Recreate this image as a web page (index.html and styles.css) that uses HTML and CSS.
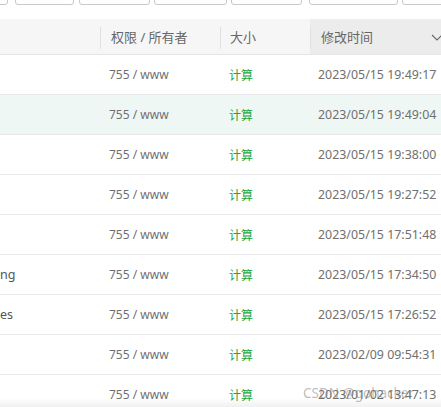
FILE: index.html
```html
<!DOCTYPE html>
<html lang="zh">
<head>
<meta charset="utf-8">
<link rel="stylesheet" href="styles.css">
</head>
<body>
<div class="page">
  <div class="toolbar">
    <span class="btn b1"></span>
    <span class="btn b2"></span>
    <span class="btn b3"></span>
    <span class="btn b4"></span>
    <span class="btn b5"></span>
    <span class="btn b6"></span>
    <span class="btn b7"></span>
  </div>
  <div class="table">
    <div class="row head">
      <div class="cell c1"></div>
      <div class="cell c2"><span class="sep"></span>权限 / 所有者</div>
      <div class="cell c3"><span class="sep"></span>大小</div>
      <div class="cell c4 sorted"><span class="sep"></span>修改时间
        <svg class="chev" width="12" height="8" viewBox="0 0 12 8"><polyline points="1,1 6,6 11,1" fill="none" stroke="#666" stroke-width="1.1"/></svg>
      </div>
    </div>
    <div class="row"><div class="cell c1"></div><div class="cell c2">755 / www</div><div class="cell c3 calc">计算</div><div class="cell c4">2023/05/15 19:49:17</div></div>
    <div class="row hl"><div class="cell c1"></div><div class="cell c2">755 / www</div><div class="cell c3 calc">计算</div><div class="cell c4">2023/05/15 19:49:04</div></div>
    <div class="row"><div class="cell c1"></div><div class="cell c2">755 / www</div><div class="cell c3 calc">计算</div><div class="cell c4">2023/05/15 19:38:00</div></div>
    <div class="row"><div class="cell c1"></div><div class="cell c2">755 / www</div><div class="cell c3 calc">计算</div><div class="cell c4">2023/05/15 19:27:52</div></div>
    <div class="row"><div class="cell c1"></div><div class="cell c2">755 / www</div><div class="cell c3 calc">计算</div><div class="cell c4">2023/05/15 17:51:48</div></div>
    <div class="row"><div class="cell c1 name">ng</div><div class="cell c2">755 / www</div><div class="cell c3 calc">计算</div><div class="cell c4">2023/05/15 17:34:50</div></div>
    <div class="row"><div class="cell c1 name">es</div><div class="cell c2">755 / www</div><div class="cell c3 calc">计算</div><div class="cell c4">2023/05/15 17:26:52</div></div>
    <div class="row"><div class="cell c1"></div><div class="cell c2">755 / www</div><div class="cell c3 calc">计算</div><div class="cell c4">2023/02/09 09:54:31</div></div>
    <div class="row"><div class="cell c1"></div><div class="cell c2">755 / www</div><div class="cell c3 calc">计算</div><div class="cell c4">2023/01/02 13:47:13</div></div>
  </div>
  <div class="watermark">CSDN @gohacker</div>
  <div class="fade"></div>
</div>
</body>
</html>
```
FILE: styles.css
```css
html, body {
  margin: 0;
  padding: 0;
  background: #fff;
}
body {
  font-family: "Noto Sans", "Noto Sans CJK SC", sans-serif;
  color: #707070;
  overflow: hidden;
}
.page {
  position: relative;
  width: 441px;
  height: 407px;
  overflow: hidden;
}
.toolbar {
  height: 5px;
  display: flex;
  align-items: flex-end;
  overflow: hidden;
  margin-bottom: 14px;
}
.btn {
  flex: none;
  height: 30px;
  box-sizing: border-box;
  border: 1px solid #c8c8c8;
  border-radius: 3px;
  background: #fff;
}
.b1 { width: 20px; margin-left: -12px; }
.b2 { width: 59px; margin-left: 7px; }
.b3 { width: 71px; margin-left: 5px; }
.b4 { width: 73px; margin-left: 4px; }
.b5 { width: 71px; margin-left: 4px; }
.b6 { width: 89px; margin-left: 7px; }
.b7 { width: 60px; margin-left: 4px; }
.table {
  width: 460px;
}
.row {
  display: flex;
  height: 40px;
  box-sizing: border-box;
  border-bottom: 1px solid #e8e8e8;
  font-size: 12px;
}
.row.hl {
  background: #eff7f5;
}
.row.head {
  height: 36px;
  background: #f6f6f6;
  border-bottom: 1px solid #e5e5e5;
  font-size: 13px;
  color: #666;
}
.cell {
  position: relative;
  flex: none;
  display: flex;
  align-items: center;
  box-sizing: border-box;
  padding-left: 9px;
  white-space: nowrap;
}
.c1 { width: 100px; padding-left: 0; }
.c2 { width: 120px; }
.c3 { width: 90px; }
.c4 { width: 150px; padding-left: 8px; font-size: 12.4px; }
.name { color: #555; font-size: 12.5px; }
.head .c2 { padding-left: 11px; }
.head .c3 { padding-left: 10px; }
.head .c4 { padding-left: 11px; font-size: 13px; }
.sorted { background: #ececec; }
.sep {
  position: absolute;
  left: 0;
  top: 8px;
  height: 22px;
  width: 1px;
  background: #e0e0e0;
}
.calc {
  color: #20a53a;
}
.chev {
  position: absolute;
  left: 121px;
  top: 15px;
}
.watermark {
  position: absolute;
  left: 303px;
  top: 384px;
  font-size: 13.5px;
  color: rgba(120, 120, 120, 0.5);
  white-space: nowrap;
}
.fade {
  position: absolute;
  left: 0;
  right: 0;
  bottom: 0;
  height: 9px;
  background: linear-gradient(rgba(0,0,0,0), rgba(0,0,0,0.06));
}
```
